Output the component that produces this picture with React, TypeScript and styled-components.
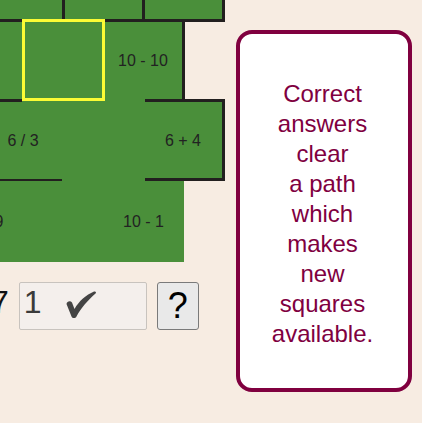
import React from 'react';
import styled, { createGlobalStyle } from 'styled-components';

const GlobalStyle = createGlobalStyle`
    html, body {
        margin: 0;
        padding: 0;
        background: #f7ece2;
        font-family: 'Liberation Sans', Arial, sans-serif;
    }
`;

const Page = styled.div`
    display: flex;
    align-items: flex-start;
    width: 422px;
    height: 423px;
    overflow: hidden;
`;
const Venstre = styled.div`
    display: flex;
    flex-direction: column;
    width: 225px;
    flex-shrink: 0;
`;
const Brett = styled.div`
    position: relative;
    width: 225px;
    height: 262px;
    overflow: hidden;
`;
const Rute = styled.div<{ $x: number; $y: number; $w: number; $h: number }>`
    position: absolute;
    left: ${(p) => p.$x}px;
    top: ${(p) => p.$y}px;
    width: ${(p) => p.$w}px;
    height: ${(p) => p.$h}px;
    background: #4a8f3a;
    display: flex;
    align-items: center;
    justify-content: center;
    padding-top: 2px;
    box-sizing: border-box;
    font-size: 16px;
    color: #222;
`;
const Vegg = styled.div<{ $x: number; $y: number; $w: number; $h: number }>`
    position: absolute;
    left: ${(p) => p.$x}px;
    top: ${(p) => p.$y}px;
    width: ${(p) => p.$w}px;
    height: ${(p) => p.$h}px;
    background: #221f1f;
`;
const Markering = styled.div`
    position: absolute;
    left: 22px;
    top: 19px;
    width: 83px;
    height: 82px;
    box-sizing: border-box;
    border: 3px solid #fbfb35;
`;
const Kontroller = styled.div`
    display: flex;
    align-items: flex-start;
    margin-top: 20px;
    height: 48px;
`;
const Poeng = styled.span`
    margin-left: -9px;
    margin-top: 4px;
    font-size: 32px;
    line-height: 32px;
    color: #111;
`;
const Svarfelt = styled.div`
    display: flex;
    align-items: flex-start;
    box-sizing: border-box;
    margin-left: 10px;
    width: 128px;
    height: 48px;
    padding: 3px 0 0 4px;
    background: #f4efec;
    border: 1px solid #c8c3be;
    border-radius: 2px;
    font-size: 32px;
    line-height: 32px;
    color: #3a3a3a;
`;
const Hake = styled.svg`
    margin: 4px 0 0 22px;
    width: 34px;
    height: 30px;
    fill: #444;
`;
const Hjelpeknapp = styled.button`
    display: flex;
    align-items: center;
    justify-content: center;
    box-sizing: border-box;
    margin-left: 10px;
    width: 42px;
    height: 48px;
    padding: 0;
    background: #e9e9e9;
    border: 1px solid #7a7a7a;
    border-radius: 3px;
    font-family: 'Liberation Sans', Arial, sans-serif;
    font-size: 36px;
    line-height: 36px;
    color: #000;
`;
const Infoboks = styled.div`
    box-sizing: border-box;
    margin: 30px 0 0 11px;
    width: 176px;
    height: 362px;
    padding: 45px 3px 0 0;
    background: #fff;
    border: 4px solid #80003f;
    border-radius: 16px;
    color: #80003f;
    font-size: 24px;
    line-height: 30px;
    text-align: center;
`;

const ruter = [
    { x: -17, y: -60, w: 80, h: 80, tekst: '' },
    { x: 63, y: -60, w: 80, h: 80, tekst: '' },
    { x: 143, y: -60, w: 80, h: 80, tekst: '' },
    { x: -57, y: 20, w: 80, h: 80, tekst: '' },
    { x: 23, y: 20, w: 80, h: 80, tekst: '' },
    { x: 103, y: 20, w: 80, h: 80, tekst: '10 - 10' },
    { x: -17, y: 100, w: 80, h: 80, tekst: '6 / 3' },
    { x: 63, y: 100, w: 80, h: 80, tekst: '' },
    { x: 143, y: 100, w: 80, h: 80, tekst: '6 + 4' },
    { x: -57, y: 180, w: 80, h: 82, tekst: '10 - 9' },
    { x: 23, y: 180, w: 80, h: 82, tekst: '' },
    { x: 103, y: 180, w: 81, h: 82, tekst: '10 - 1' },
];

const vegger = [
    { x: 62, y: 0, w: 3, h: 20 },
    { x: 142, y: 0, w: 3, h: 20 },
    { x: 222, y: 0, w: 3, h: 22 },
    { x: 0, y: 19, w: 22, h: 3 },
    { x: 105, y: 19, w: 120, h: 3 },
    { x: 182, y: 20, w: 3, h: 82 },
    { x: 0, y: 99, w: 22, h: 3 },
    { x: 145, y: 99, w: 80, h: 3 },
    { x: 222, y: 99, w: 3, h: 82 },
    { x: 0, y: 179, w: 62, h: 2 },
    { x: 145, y: 178, w: 80, h: 3 },
];

const linjer = ['Correct', 'answers', 'clear', 'a path', 'which', 'makes', 'new', 'squares', 'available.'];

export default function App() {
    return (
        <Page>
            <GlobalStyle />
            <Venstre>
                <Brett>
                    {ruter.map((r, i) => (
                        <Rute key={i} $x={r.x} $y={r.y} $w={r.w} $h={r.h}>
                            {r.tekst}
                        </Rute>
                    ))}
                    {vegger.map((v, i) => (
                        <Vegg key={i} $x={v.x} $y={v.y} $w={v.w} $h={v.h} />
                    ))}
                    <Markering />
                </Brett>
                <Kontroller>
                    <Poeng>7</Poeng>
                    <Svarfelt>
                        1
                        <Hake viewBox="0 0 34 30">
                            <path d="M2.5,14 C3,11 6.5,10.5 8,12.5 L10.5,19 C15,11 22,5 30,1.5 C32,1 32.5,2.5 31.5,3.5 C24,10 17,18 12.5,26.5 C11.5,28.5 8.5,28.8 7.5,26.5 Z" />
                        </Hake>
                    </Svarfelt>
                    <Hjelpeknapp>?</Hjelpeknapp>
                </Kontroller>
            </Venstre>
            <Infoboks>
                {linjer.map((l, i) => (
                    <div key={i}>{l}</div>
                ))}
            </Infoboks>
        </Page>
    );
}
